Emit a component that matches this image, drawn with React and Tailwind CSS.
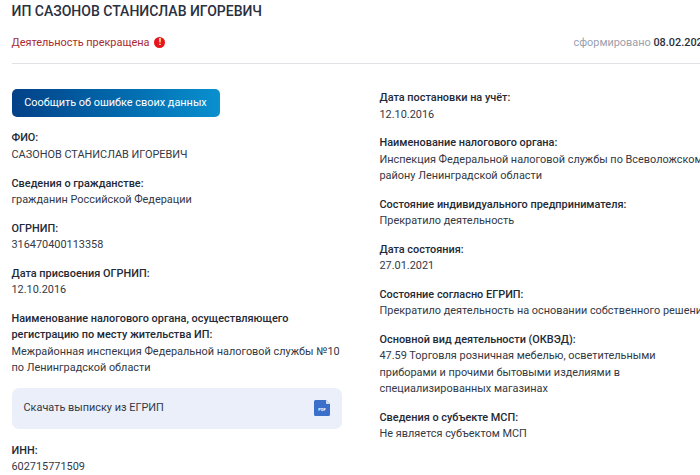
const F = ({ label, children, className = "" }) => (
  <div className={`text-[10.9px] leading-[16.5px] text-[#333845] ${className}`}>
    <div className="font-medium text-[#232936]">{label}</div>
    <div>{children}</div>
  </div>
);

export default function App() {
  return (
    <div className="h-[475px] w-[700px] overflow-hidden bg-white font-['Roboto',sans-serif]">
      <div className="w-[760px] pl-[11.5px]">
        <h1 className="pt-[2px] text-[14px] leading-[18px] font-medium text-[#2a3040]">ИП САЗОНОВ СТАНИСЛАВ ИГОРЕВИЧ</h1>
        <div className="mt-[14px] flex h-[18px] items-center justify-between pr-[51px] text-[10.9px]">
          <div className="flex items-center gap-[5px] text-[#a92b2f]">
            <span>Деятельность прекращена</span>
            <span className="flex h-[11px] w-[11px] items-center justify-center rounded-full bg-[#e8141c] text-[9px] leading-none font-bold text-white">!</span>
          </div>
          <div className="text-[#9aa1ad]">
            сформировано <span className="font-medium text-[#2a3040]">08.02.2022</span>
          </div>
        </div>
        <div className="mt-[11px] h-px bg-[#e0e2e6]" />
        <div className="mt-[25px] flex">
          <div className="flex w-[330px] flex-col">
            <button className="h-[28px] w-[208px] rounded-[5px] bg-gradient-to-r from-[#034188] to-[#0a90cf] text-[10.9px] text-white">
              Сообщить об ошибке своих данных
            </button>
            <F label="ФИО:" className="mt-[13px]">САЗОНОВ СТАНИСЛАВ ИГОРЕВИЧ</F>
            <F label="Сведения о гражданстве:" className="mt-[12.6px]">гражданин Российской Федерации</F>
            <F label="ОГРНИП:" className="mt-[12px]">316470400113358</F>
            <F label="Дата присвоения ОГРНИП:" className="mt-[12px]">12.10.2016</F>
            <F
              label={<>Наименование налогового органа, осуществляющего<br />регистрацию по месту жительства ИП:</>}
              className="mt-[12px]"
            >
              Межрайонная инспекция Федеральной налоговой службы №10<br />по Ленинградской области
            </F>
            <div className="mt-[11.4px] flex h-[41px] items-center justify-between rounded-[7px] bg-[#ebeff9] pr-[12px] pl-[12px] text-[10.9px] text-[#333845]">
              <span>Скачать выписку из ЕГРИП</span>
              <svg width="16" height="16" viewBox="0 0 16 16">
                <path d="M2 0H12L16 4V14.5A1.5 1.5 0 0 1 14.5 16H1.5A1.5 1.5 0 0 1 0 14.5V1.5A1.5 1.5 0 0 1 1.5 0Z" fill="#3b6fc9" />
                <path d="M12 0L16 4H13A1 1 0 0 1 12 3Z" fill="#dbe5f7" />
                <text x="8" y="10.5" textAnchor="middle" fontSize="4" fontWeight="700" fill="#fff">PDF</text>
              </svg>
            </div>
            <F label="ИНН:" className="mt-[14px]">602715771509</F>
          </div>
          <div className="ml-[38px] flex w-[380px] flex-col">
            <F label="Дата постановки на учёт:" className="mt-[1px]">12.10.2016</F>
            <F label="Наименование налогового органа:" className="mt-[12px]">
              Инспекция Федеральной налоговой службы по Всеволожскому<br />району Ленинградской области
            </F>
            <F label="Состояние индивидуального предпринимателя:" className="mt-[12px]">Прекратило деятельность</F>
            <F label="Дата состояния:" className="mt-[12px]">27.01.2021</F>
            <F label="Состояние согласно ЕГРИП:" className="mt-[12px]">Прекратило деятельность на основании собственного решения</F>
            <F label="Основной вид деятельности (ОКВЭД):" className="mt-[12px]">
              47.59 Торговля розничная мебелью, осветительными<br />приборами и прочими бытовыми изделиями в<br />специализированных магазинах
            </F>
            <F label="Сведения о субъекте МСП:" className="mt-[12px]">Не является субъектом МСП</F>
          </div>
        </div>
      </div>
    </div>
  );
}
